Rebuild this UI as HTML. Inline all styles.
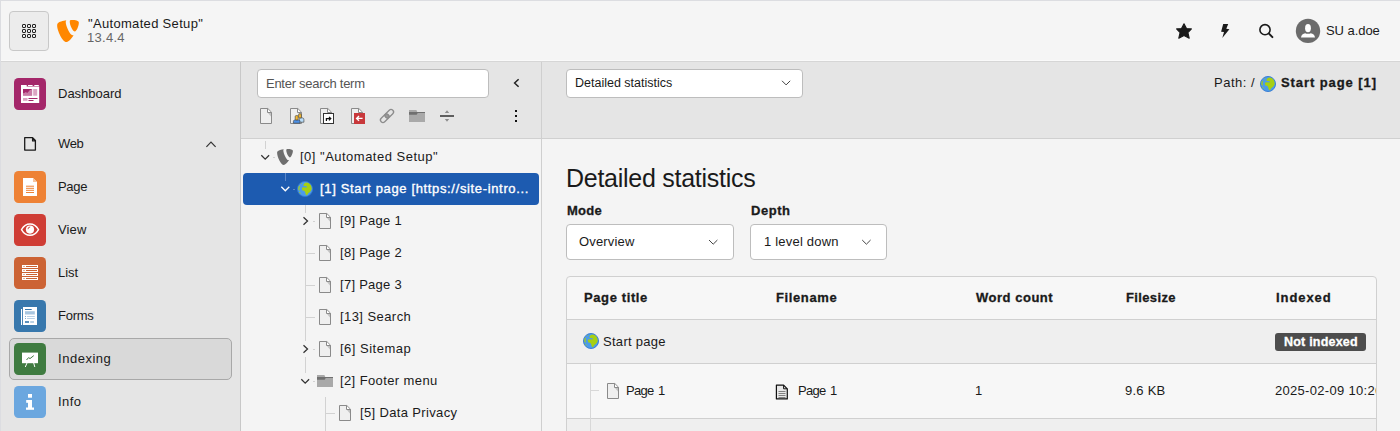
<!DOCTYPE html>
<html><head><meta charset="utf-8">
<style>
*{box-sizing:border-box}
html,body{margin:0;padding:0}
body{width:1400px;height:431px;overflow:hidden;position:relative;background:#f4f4f4;font-family:"Liberation Sans",sans-serif;color:#1a1a1a}
.a{position:absolute}
.t{position:absolute;white-space:nowrap;line-height:1;font-size:13px}
.b{font-weight:bold;-webkit-text-stroke:0.3px currentColor}
/* regions */
#hdr{left:0;top:0;width:1400px;height:62px;background:#f5f5f5;border-bottom:1px solid #d6d6d6}
#edgeT{left:0;top:0;width:1400px;height:1px;background:#dcdde1}
#edgeL{left:0;top:0;width:1px;height:431px;background:#dcdde1;z-index:5}
#side{left:0;top:62px;width:241px;height:369px;background:#e5e5e5;border-right:1px solid #c8c8c8}
#treetop{left:241px;top:62px;width:300px;height:77px;background:#e5e5e5;border-bottom:1px solid #d0d0d0}
#tree{left:241px;top:139px;width:300px;height:292px;background:#f4f4f4}
#treeR{left:541px;top:62px;width:1px;height:369px;background:#cfcfcf}
#doch{left:542px;top:62px;width:858px;height:77px;background:#e5e5e5;border-bottom:1px solid #d0d0d0}
#mod{left:542px;top:139px;width:858px;height:292px;background:#f4f4f4}
.grid{left:9px;top:11px;width:40px;height:40px;border:1px solid #c8c8c8;border-radius:4px;background:#ececec}
.mi{position:absolute;left:14px;width:32px;height:32px;border-radius:4.5px}
.sel{left:9px;top:338px;width:223px;height:42px;border:1px solid #a8a8a8;border-radius:5px;background:#d9d9d9}
.inp{position:absolute;background:#fff;border:1px solid #bdbdbd;border-radius:4px}
.chev{position:absolute;width:6px;height:6px;border-right:1px solid #333;border-bottom:1px solid #333}
</style></head>
<body>
<div id="hdr" class="a"></div>
<div id="edgeT" class="a"></div>
<div class="a" style="left:0;top:60px;width:1400px;height:1px;background:#fafafa"></div>
<div id="edgeL" class="a"></div>
<div id="side" class="a"></div>
<div id="treetop" class="a"></div>
<div id="tree" class="a"></div>
<div id="treeR" class="a"></div>
<div id="doch" class="a"></div>
<div id="mod" class="a"></div>

<!-- header -->
<div class="a grid"></div>
<div class="t" style="left:88px;top:17px;letter-spacing:0.32px">"Automated Setup"</div>
<div class="t" style="left:87px;top:31px;color:#666;letter-spacing:0.29px">13.4.4</div>
<div class="t" style="left:1326px;top:24px;letter-spacing:-0.06px">SU a.doe</div>

<!-- sidebar -->
<div class="a sel"></div>
<div class="mi" style="top:78px;background:#a4276a"></div>
<div class="mi" style="top:171px;background:#ee8235"></div>
<div class="mi" style="top:214px;background:#cf3d35"></div>
<div class="mi" style="top:257px;background:#cc6334"></div>
<div class="mi" style="top:300px;background:#3878ad"></div>
<div class="mi" style="top:343px;background:#3f7b40"></div>
<div class="mi" style="top:386px;background:#6ba7df"></div>
<div class="t" style="left:58px;top:87px">Dashboard</div>
<div class="t" style="left:58px;top:137px;letter-spacing:-0.4px">Web</div>
<div class="t" style="left:58px;top:180px;letter-spacing:-0.3px">Page</div>
<div class="t" style="left:58px;top:223px;letter-spacing:0.12px">View</div>
<div class="t" style="left:58px;top:266px">List</div>
<div class="t" style="left:58px;top:309px;letter-spacing:-0.26px">Forms</div>
<div class="t" style="left:58px;top:352px;letter-spacing:0.52px">Indexing</div>
<div class="t" style="left:58px;top:395px;letter-spacing:0.4px">Info</div>

<!-- tree toolbar -->
<div class="inp" style="left:257px;top:69px;width:232px;height:29px"></div>
<div class="t" style="left:266px;top:77px;color:#555;letter-spacing:-0.27px">Enter search term</div>

<!-- tree -->
<div class="a" style="left:243px;top:173px;width:296px;height:32px;background:#1d5bb0;border-radius:4px"></div>
<div class="t" style="left:300px;top:150px;letter-spacing:0.49px">[0] "Automated Setup"</div>
<div class="t" style="left:320px;top:182px;color:#fff;letter-spacing:0.65px;-webkit-text-stroke:0.35px #fff">[1] Start page [https://site-intro...</div>
<div class="t" style="left:340px;top:214px;letter-spacing:0.27px">[9] Page 1</div>
<div class="t" style="left:340px;top:246px;letter-spacing:0.27px">[8] Page 2</div>
<div class="t" style="left:340px;top:278px;letter-spacing:0.27px">[7] Page 3</div>
<div class="t" style="left:340px;top:310px;letter-spacing:0.43px">[13] Search</div>
<div class="t" style="left:340px;top:342px;letter-spacing:0.49px">[6] Sitemap</div>
<div class="t" style="left:340px;top:374px;letter-spacing:0.39px">[2] Footer menu</div>
<div class="t" style="left:360px;top:406px;letter-spacing:0.35px">[5] Data Privacy</div>

<!-- docheader -->
<div class="inp" style="left:566px;top:69px;width:237px;height:29px"></div>
<div class="t" style="left:575px;top:77px;font-size:12.5px">Detailed statistics</div>
<div class="t" style="left:1214px;top:76px;letter-spacing:0.51px">Path: /</div>
<div class="t b" style="left:1281px;top:76px;letter-spacing:0.92px">Start page [1]</div>

<!-- module -->
<div class="t" style="left:566px;top:166px;font-size:25px;letter-spacing:-0.27px">Detailed statistics</div>
<div class="t b" style="left:567px;top:204px;letter-spacing:0.29px">Mode</div>
<div class="t b" style="left:751px;top:204px;letter-spacing:0.54px">Depth</div>
<div class="inp" style="left:566px;top:224px;width:168px;height:36px"></div>
<div class="inp" style="left:750px;top:224px;width:137px;height:36px"></div>
<div class="t" style="left:579px;top:235px;letter-spacing:0.17px">Overview</div>
<div class="t" style="left:764px;top:235px;letter-spacing:0.21px">1 level down</div>

<!-- table -->
<div class="a" style="left:566px;top:276px;width:811px;height:160px;border:1px solid #d0d0d0;border-radius:4px;background:#f7f7f7;overflow:hidden">
  <div class="a" style="left:0;top:42px;width:834px;height:1px;background:#d0d0d0"></div>
  <div class="a" style="left:0;top:43px;width:834px;height:43px;background:#efefef"></div>
  <div class="a" style="left:0;top:86px;width:834px;height:1px;background:#d0d0d0"></div>
  <div class="a" style="left:0;top:141px;width:834px;height:1px;background:#d0d0d0"></div>
  <div class="a" style="left:0;top:142px;width:834px;height:20px;background:#efefef"></div>
</div>
<div class="t b" style="left:584px;top:291px;letter-spacing:0.61px">Page title</div>
<div class="t b" style="left:776px;top:291px;letter-spacing:0.62px">Filename</div>
<div class="t b" style="left:976px;top:291px;letter-spacing:0.52px">Word count</div>
<div class="t b" style="left:1126px;top:291px;letter-spacing:0.36px">Filesize</div>
<div class="t b" style="left:1276px;top:291px;letter-spacing:0.93px">Indexed</div>
<div class="t" style="left:603px;top:335px;letter-spacing:0.29px">Start page</div>
<div class="a" style="left:1275px;top:333px;width:91px;height:18px;background:#4d4d4d;border-radius:3px"></div>
<div class="t b" style="left:1284px;top:336px;color:#fff;font-size:12.5px;letter-spacing:0.21px">Not indexed</div>
<div class="t" style="left:626px;top:384px;letter-spacing:-0.7px;word-spacing:1.6px">Page 1</div>
<div class="t" style="left:798px;top:384px;letter-spacing:-0.7px;word-spacing:1.6px">Page 1</div>
<div class="t" style="left:975px;top:384px">1</div>
<div class="t" style="left:1125px;top:384px;letter-spacing:0.24px">9.6 KB</div>
<div class="a" style="left:1275px;top:380px;width:101px;height:20px;overflow:hidden"><div class="t" style="left:0;top:4px;letter-spacing:0.3px">2025-02-09 10:26</div></div>


<svg class="a" style="left:0;top:0;z-index:3" width="1400" height="431" viewBox="0 0 1400 431">
<defs>
 
 
 <clipPath id="gc"><circle cx="8" cy="8" r="7.1"/></clipPath>
</defs>
<!-- header -->
<g fill="none" stroke="#1a1a1a" stroke-width="0.95">
 <rect x="22.5" y="24.5" width="3" height="3" rx="0.5"/> <rect x="27.5" y="24.5" width="3" height="3" rx="0.5"/> <rect x="32.5" y="24.5" width="3" height="3" rx="0.5"/> <rect x="22.5" y="29.5" width="3" height="3" rx="0.5"/> <rect x="27.5" y="29.5" width="3" height="3" rx="0.5"/> <rect x="32.5" y="29.5" width="3" height="3" rx="0.5"/> <rect x="22.5" y="34.5" width="3" height="3" rx="0.5"/> <rect x="27.5" y="34.5" width="3" height="3" rx="0.5"/> <rect x="32.5" y="34.5" width="3" height="3" rx="0.5"/>
</g>
<g transform="translate(57,20) scale(0.91667)" fill="#ff8700"><path d="M18.08 16.539c-.356.105-.64.144-1.012.144-3.048 0-7.524-10.652-7.524-14.197 0-1.305.31-1.74.745-2.114C6.56.808 2.082 2.177.652 3.917c-.311.436-.497 1.12-.497 1.99C.155 11.442 6.06 24 10.228 24c1.928 0 5.178-3.168 7.852-7.46M16.134.001c3.855 0 7.71.622 7.71 2.798 0 4.415-2.8 9.765-4.23 9.765-2.549 0-5.72-7.09-5.72-10.635C13.894.31 14.518 0 16.134 0"/></g>
<path d="M1184 23.8L1186.5 28.6L1191.4 28.9L1187.9 32.6L1189.2 38.2L1184 35.6L1178.8 38.2L1180.1 32.6L1176.6 28.9L1181.5 28.6Z" fill="#1a1a1a" stroke="#1a1a1a" stroke-width="1.1" stroke-linejoin="round"/>
<path d="M1223.2 24.1H1228.2L1226.3 28.8L1229.4 29.2L1222.3 38L1224 32L1221.1 31.8Z" fill="#1a1a1a"/>
<circle cx="1265" cy="29.7" r="5.1" fill="none" stroke="#1a1a1a" stroke-width="1.6"/>
<path d="M1269.2 33.9L1272.4 37.1" stroke="#1a1a1a" stroke-width="2" stroke-linecap="round"/>
<circle cx="1308" cy="30.9" r="12.2" fill="#6b6b6b"/>
<ellipse cx="1308" cy="28.2" rx="2.9" ry="4.1" fill="#fff"/>
<path d="M1301 37.6C1301.3 35 1303 33.6 1305.2 33.3C1306.5 34 1309.5 34 1310.8 33.3C1313 33.6 1314.7 35 1315 37.6Z" fill="#fff"/>

<!-- sidebar -->
<path d="M24.7 137.7H32.6L35.4 140.5V150.1H24.7Z M32.6 137.7V140.9H35.4" fill="none" stroke="#1a1a1a" stroke-width="1.3" stroke-linejoin="round"/>
<path d="M206.4 146.8L211 142.2L215.6 146.8" fill="none" stroke="#333" stroke-width="1.2"/>
<!-- dashboard -->
<g transform="translate(14,78)">
 <path d="M7 7H12.7V8.5H25.2V25.1H7Z" fill="#fff"/>
 <rect x="14" y="7" width="4.6" height="1" fill="#fff"/><rect x="20.3" y="7" width="4.5" height="1" fill="#fff"/>
 <rect x="9" y="11" width="9.1" height="6.7" fill="#dba5c2"/>
 <path d="M9 15.8L11.5 14.6L13.5 15L16 12.2L18.1 11.6V11H9Z" fill="#a4276a"/>
 <path d="M9 17.7V15.8L11.5 14.6L13.5 15L16 12.2L18.1 11.6V17.7Z" fill="#c97aa4"/>
 <rect x="19.2" y="11" width="4" height="6.7" fill="#dba5c2"/>
 <rect x="9" y="20" width="4.5" height="2.8" fill="#dba5c2"/>
 <rect x="14.5" y="20" width="9" height="1" fill="#a4276a"/><rect x="14.5" y="22" width="5" height="1" fill="#a4276a"/>
</g>
<!-- page -->
<g transform="translate(14,171)">
 <path d="M9 7H19L23 11V25H9Z" fill="#fff"/>
 <path d="M19 7L23 11H19Z" fill="#f6c39e"/>
 <rect x="12" y="14.7" width="8" height="1" fill="#ee8235"/><rect x="12" y="16.8" width="8" height="1" fill="#ee8235"/><rect x="12" y="18.8" width="8" height="1" fill="#ee8235"/><rect x="12" y="21" width="8" height="1" fill="#ee8235"/>
</g>
<!-- view -->
<g transform="translate(14,214)">
 <path d="M7.5 15.6C10 11.3 13 10 16 10C19 10 22 11.3 24.5 15.6C22 20 19 21.3 16 21.3C13 21.3 10 20 7.5 15.6Z" fill="none" stroke="#fff" stroke-width="1.4"/>
 <circle cx="16" cy="15.6" r="4.1" fill="#fff"/>
 <path d="M14 15.2A2.2 2.2 0 0 1 16.2 13" fill="none" stroke="#cf3d35" stroke-width="0.9"/>
</g>
<!-- list -->
<g transform="translate(14,257)">
 <g fill="#fff"><rect x="8" y="8" width="16" height="3"/><rect x="8" y="12" width="16" height="3"/><rect x="8" y="16" width="16" height="3"/><rect x="8" y="20" width="16" height="3"/></g>
 <g fill="#cc6334"><rect x="12" y="9" width="11" height="1"/><rect x="12" y="13" width="11" height="1"/><rect x="12" y="17" width="11" height="1"/><rect x="12" y="21" width="11" height="1"/>
 <rect x="9.5" y="9" width="1" height="1"/><rect x="9.5" y="13" width="1" height="1"/><rect x="9.5" y="17" width="1" height="1"/><rect x="9.5" y="21" width="1" height="1"/></g>
</g>
<!-- forms -->
<g transform="translate(14,300)">
 <rect x="7" y="9" width="1.1" height="16" fill="#fff"/>
 <rect x="9" y="7" width="14" height="18" fill="#fff"/>
 <rect x="11" y="9" width="6.7" height="1" fill="#3878ad"/>
 <rect x="11" y="11.2" width="9.8" height="3.3" fill="#a9c6df"/>
 <rect x="11" y="16" width="0.8" height="0.8" fill="#3878ad"/><rect x="13" y="16" width="7.8" height="0.8" fill="#a9c6df"/>
 <rect x="11" y="18" width="0.8" height="0.8" fill="#3878ad"/><rect x="13" y="18" width="7.8" height="0.8" fill="#a9c6df"/>
 <rect x="11" y="21.2" width="4" height="1.6" fill="#3878ad"/><rect x="16.2" y="21.2" width="3.8" height="1.6" fill="#a9c6df"/>
</g>
<!-- indexing -->
<g transform="translate(14,343)">
 <rect x="8" y="9.6" width="16" height="10.6" fill="#fff"/>
 <path d="M13 20L11.3 24 M19.7 20L20.8 24" stroke="#fff" stroke-width="1"/>
 <path d="M12.5 17L14.6 14.6L16 15.6L19.8 12.6" fill="none" stroke="#3f7b40" stroke-width="1"/>
</g>
<!-- info -->
<g transform="translate(14,386)" fill="#fff">
 <rect x="14" y="8" width="4" height="3.7"/>
 <rect x="12.2" y="14" width="5.8" height="2.8"/>
 <rect x="14" y="14" width="4" height="8.5"/>
 <rect x="12" y="21.5" width="8" height="2.3"/>
</g>

<!-- tree toolbar -->
<g transform="translate(258,108) scale(1.00000)"><path d="M2.5 0.5H9.8L13.5 4.2V15.5H2.5Z" fill="#efefef" stroke="#8a8a8a"/><path d="M10 1.5V4H12.5Z" fill="#fff"/><path d="M9.5 0.5V4.5H13.5" fill="none" stroke="#8a8a8a"/><path d="M10 5H13V8.6Z" fill="#c2c2c2"/></g>
<g transform="translate(288,108) scale(1.00000)"><path d="M2.5 0.5H9.8L13.5 4.2V15.5H2.5Z" fill="#efefef" stroke="#8a8a8a"/><path d="M10 1.5V4H12.5Z" fill="#fff"/><path d="M9.5 0.5V4.5H13.5" fill="none" stroke="#8a8a8a"/><path d="M10 5H13V8.6Z" fill="#c2c2c2"/></g>
<g transform="translate(288,108)" stroke="#4a4a4a" stroke-width="0.7">
 <path d="M11.3 14.2V11.6C11.3 10.6 11.9 9.9 12.9 9.9H14.3C15.3 9.9 15.9 10.6 15.9 11.6V14.2Z" fill="#b9defb"/>
 <rect x="10.6" y="5.8" width="2.8" height="4.1" rx="1" fill="#f6b92f"/>
 <path d="M5.4 15.2V13.4C5.4 12.5 6 11.9 7 11.9H10.4C11.4 11.9 12 12.5 12 13.4V15.2Z" fill="#4b90e6"/>
 <rect x="7.2" y="7.6" width="3" height="4.3" rx="1" fill="#f6b92f"/>
</g>
<g transform="translate(318,108) scale(1.00000)"><path d="M2.5 0.5H9.8L13.5 4.2V15.5H2.5Z" fill="#efefef" stroke="#8a8a8a"/><path d="M10 1.5V4H12.5Z" fill="#fff"/><path d="M9.5 0.5V4.5H13.5" fill="none" stroke="#8a8a8a"/><path d="M10 5H13V8.6Z" fill="#c2c2c2"/></g>
<g transform="translate(318,108)">
 <rect x="5.5" y="5.5" width="10" height="10" fill="#fff" stroke="#333"/>
 <path d="M8.4 13V10.6H12.2 M11 8.8L12.8 10.6L11 12.4" fill="none" stroke="#111" stroke-width="1.2"/>
</g>
<g transform="translate(349,108) scale(1.00000)"><path d="M2.5 0.5H9.8L13.5 4.2V15.5H2.5Z" fill="#efefef" stroke="#8a8a8a"/><path d="M10 1.5V4H12.5Z" fill="#fff"/><path d="M9.5 0.5V4.5H13.5" fill="none" stroke="#8a8a8a"/><path d="M10 5H13V8.6Z" fill="#c2c2c2"/></g>
<g transform="translate(349,108)">
 <rect x="5" y="5" width="11" height="11" fill="#c8383b"/>
 <path d="M7.3 10.4H13.6 M10 8L7.6 10.4L10 12.8" fill="none" stroke="#fff" stroke-width="1.4"/>
</g>
<g transform="rotate(-45 387 116)" stroke="#8c8c8c" stroke-width="1.3">
 <rect x="385.2" y="113.5" width="3.6" height="5" fill="#9a9a9a" stroke="none"/>
 <rect x="385.2" y="113.5" width="10" height="5" rx="2.5" fill="none"/>
 <rect x="378.8" y="113.5" width="10" height="5" rx="2.5" fill="none"/>
</g>
<g transform="translate(409,108)">
 <path d="M0 2H7.4L8.3 4H16V14H0Z" fill="#a9a9a9"/>
 <path d="M0 4H16V4.9H8.7L7.7 6.8H0Z" fill="#707070"/>
</g>
<g transform="translate(439,108)">
 <rect x="1" y="7" width="14" height="2" fill="#5e5e5e"/>
 <path d="M5.8 4.9L8 2.3L10.2 4.9Z M5.8 11L8 13.7L10.2 11Z" fill="#8e8e8e"/>
</g>
<g fill="#111"><rect x="515" y="110" width="2" height="2"/><rect x="515" y="115" width="2" height="2"/><rect x="515" y="120" width="2" height="2"/></g>
<path d="M518.6 79.2L514.6 83L518.6 86.8" fill="none" stroke="#222" stroke-width="1.5"/>

<!-- tree -->
<g stroke="#d2d2d2" stroke-width="1" fill="none">
 <path d="M265.5 141V149"/>
 <path d="M273 157.5H275"/>
 <path d="M285.5 173V181"/>
 <path d="M313 221.5H315 M305.5 253.5H315 M305.5 285.5H315 M305.5 317.5H315 M313 349.5H315 M313 381.5H315"/>
 <path d="M325.5 397V431 M325.5 413.5H335"/>
</g>
<path d="M305.5 205V213 M305.5 229V341 M305.5 357V373" stroke="#d2d2d2" fill="none"/>
<path d="M261.3 155.3L265.2 159.2L269.1 155.3" fill="none" stroke="#333" stroke-width="1.3"/>
<g transform="translate(277,149) scale(0.66667)" fill="#6e6e6e"><path d="M18.08 16.539c-.356.105-.64.144-1.012.144-3.048 0-7.524-10.652-7.524-14.197 0-1.305.31-1.74.745-2.114C6.56.808 2.082 2.177.652 3.917c-.311.436-.497 1.12-.497 1.99C.155 11.442 6.06 24 10.228 24c1.928 0 5.178-3.168 7.852-7.46M16.134.001c3.855 0 7.71.622 7.71 2.798 0 4.415-2.8 9.765-4.23 9.765-2.549 0-5.72-7.09-5.72-10.635C13.894.31 14.518 0 16.134 0"/></g>
<path d="M285.5 173V181" stroke="#5a86c8"/>
<path d="M293 189.5H295" stroke="#5a86c8"/>
<path d="M281.3 186.8L285.3 190.8L289.3 186.8" fill="none" stroke="#fff" stroke-width="1.3"/>
<g transform="translate(297,181) scale(1.00000)"><circle cx="8" cy="8" r="7.55" fill="#4c9be9" stroke="#3479d2" stroke-width="0.9"/><g clip-path="url(#gc)" fill="#a6cf12"><path d="M7.2 2.4L9 1.5L11.2 1.6L13 2.8L14.3 4.6L14.8 7L14.5 8.8L13.6 10.3L12.5 11.2L11.2 12.3L10.1 14.2L9.3 14.3L8.5 12.7L8.1 10.9L7.1 9.8L5.4 9.4L4.8 7.6L5.3 6.6L6.4 6.3L9.8 6.6L10 5.4L8 5.1L6.6 4.9L6.5 3.7Z"/><path d="M1.3 5.6L2.4 4.5L2.9 5.6L2.5 7.5L2.8 9.8L2 9.6L1.2 8Z M2.1 10.9L3.1 11.2L3.7 12.4L3 12.7L2.2 11.8Z M3.8 2.1L4.8 1.9L4.5 3L3.9 2.9Z"/></g></g>
<path d="M303.5 217.3L307.5 221L303.5 224.7" fill="none" stroke="#333" stroke-width="1.3"/>
<g transform="translate(317,213) scale(1.00000)"><path d="M2.5 0.5H9.8L13.5 4.2V15.5H2.5Z" fill="#efefef" stroke="#8a8a8a"/><path d="M10 1.5V4H12.5Z" fill="#fff"/><path d="M9.5 0.5V4.5H13.5" fill="none" stroke="#8a8a8a"/><path d="M10 5H13V8.6Z" fill="#c2c2c2"/></g>
<g transform="translate(317,245) scale(1.00000)"><path d="M2.5 0.5H9.8L13.5 4.2V15.5H2.5Z" fill="#efefef" stroke="#8a8a8a"/><path d="M10 1.5V4H12.5Z" fill="#fff"/><path d="M9.5 0.5V4.5H13.5" fill="none" stroke="#8a8a8a"/><path d="M10 5H13V8.6Z" fill="#c2c2c2"/></g>
<g transform="translate(317,277) scale(1.00000)"><path d="M2.5 0.5H9.8L13.5 4.2V15.5H2.5Z" fill="#efefef" stroke="#8a8a8a"/><path d="M10 1.5V4H12.5Z" fill="#fff"/><path d="M9.5 0.5V4.5H13.5" fill="none" stroke="#8a8a8a"/><path d="M10 5H13V8.6Z" fill="#c2c2c2"/></g>
<g transform="translate(317,309) scale(1.00000)"><path d="M2.5 0.5H9.8L13.5 4.2V15.5H2.5Z" fill="#efefef" stroke="#8a8a8a"/><path d="M10 1.5V4H12.5Z" fill="#fff"/><path d="M9.5 0.5V4.5H13.5" fill="none" stroke="#8a8a8a"/><path d="M10 5H13V8.6Z" fill="#c2c2c2"/></g>
<path d="M303.5 345.3L307.5 349L303.5 352.7" fill="none" stroke="#333" stroke-width="1.3"/>
<g transform="translate(317,341) scale(1.00000)"><path d="M2.5 0.5H9.8L13.5 4.2V15.5H2.5Z" fill="#efefef" stroke="#8a8a8a"/><path d="M10 1.5V4H12.5Z" fill="#fff"/><path d="M9.5 0.5V4.5H13.5" fill="none" stroke="#8a8a8a"/><path d="M10 5H13V8.6Z" fill="#c2c2c2"/></g>
<path d="M301.3 379.3L305.2 383.2L309.1 379.3" fill="none" stroke="#333" stroke-width="1.3"/>
<g transform="translate(317,373)">
 <path d="M0 2H7.4L8.3 4H16V14H0Z" fill="#a9a9a9"/>
 <path d="M0 4H16V4.9H8.7L7.7 6.8H0Z" fill="#707070"/>
</g>
<g transform="translate(337,405) scale(1.00000)"><path d="M2.5 0.5H9.8L13.5 4.2V15.5H2.5Z" fill="#efefef" stroke="#8a8a8a"/><path d="M10 1.5V4H12.5Z" fill="#fff"/><path d="M9.5 0.5V4.5H13.5" fill="none" stroke="#8a8a8a"/><path d="M10 5H13V8.6Z" fill="#c2c2c2"/></g>

<!-- docheader -->
<path d="M782 80.8L786.1 84.9L790.2 80.8" fill="none" stroke="#444" stroke-width="1"/>
<g transform="translate(1260,76) scale(1.00000)"><circle cx="8" cy="8" r="7.55" fill="#4c9be9" stroke="#3479d2" stroke-width="0.9"/><g clip-path="url(#gc)" fill="#a6cf12"><path d="M7.2 2.4L9 1.5L11.2 1.6L13 2.8L14.3 4.6L14.8 7L14.5 8.8L13.6 10.3L12.5 11.2L11.2 12.3L10.1 14.2L9.3 14.3L8.5 12.7L8.1 10.9L7.1 9.8L5.4 9.4L4.8 7.6L5.3 6.6L6.4 6.3L9.8 6.6L10 5.4L8 5.1L6.6 4.9L6.5 3.7Z"/><path d="M1.3 5.6L2.4 4.5L2.9 5.6L2.5 7.5L2.8 9.8L2 9.6L1.2 8Z M2.1 10.9L3.1 11.2L3.7 12.4L3 12.7L2.2 11.8Z M3.8 2.1L4.8 1.9L4.5 3L3.9 2.9Z"/></g></g>

<!-- module -->
<path d="M709 240L713.2 244.2L717.4 240" fill="none" stroke="#444" stroke-width="1"/>
<path d="M862.2 240L866.4 244.2L870.6 240" fill="none" stroke="#444" stroke-width="1"/>
<g transform="translate(583,333) scale(1.00000)"><circle cx="8" cy="8" r="7.55" fill="#4c9be9" stroke="#3479d2" stroke-width="0.9"/><g clip-path="url(#gc)" fill="#a6cf12"><path d="M7.2 2.4L9 1.5L11.2 1.6L13 2.8L14.3 4.6L14.8 7L14.5 8.8L13.6 10.3L12.5 11.2L11.2 12.3L10.1 14.2L9.3 14.3L8.5 12.7L8.1 10.9L7.1 9.8L5.4 9.4L4.8 7.6L5.3 6.6L6.4 6.3L9.8 6.6L10 5.4L8 5.1L6.6 4.9L6.5 3.7Z"/><path d="M1.3 5.6L2.4 4.5L2.9 5.6L2.5 7.5L2.8 9.8L2 9.6L1.2 8Z M2.1 10.9L3.1 11.2L3.7 12.4L3 12.7L2.2 11.8Z M3.8 2.1L4.8 1.9L4.5 3L3.9 2.9Z"/></g></g>
<path d="M590.5 364V431 M590.5 390.5H599" stroke="#d8d8d8" fill="none"/>
<g transform="translate(605,383) scale(1.00000)"><path d="M2.5 0.5H9.8L13.5 4.2V15.5H2.5Z" fill="#efefef" stroke="#8a8a8a"/><path d="M10 1.5V4H12.5Z" fill="#fff"/><path d="M9.5 0.5V4.5H13.5" fill="none" stroke="#8a8a8a"/><path d="M10 5H13V8.6Z" fill="#c2c2c2"/></g>
<g transform="translate(774,384)">
 <path d="M2.4 1.1H9.6L13.3 4.8V14.9H2.4Z" fill="#e8e8e8" stroke="#111" stroke-width="1.2" stroke-linejoin="round"/>
 <path d="M9.6 1.1V4.8H13.3" fill="none" stroke="#111" stroke-width="1"/>
 <g fill="#777"><rect x="4.5" y="7" width="7" height="0.9"/><rect x="4.5" y="9" width="7" height="0.9"/><rect x="4.5" y="11" width="7" height="0.9"/><rect x="4.5" y="13" width="7" height="0.9"/></g>
</g>
</svg>

</body></html>
